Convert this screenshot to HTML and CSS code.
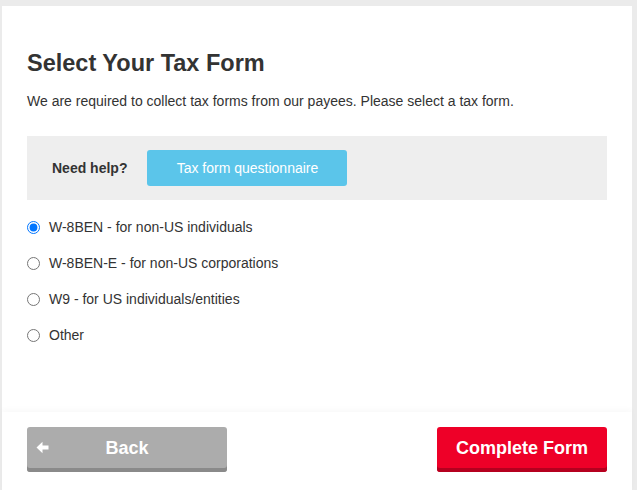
FILE: index.html
```html
<!DOCTYPE html>
<html lang="en">
<head>
    <meta charset="UTF-8">
    <title>Select Your Tax Form</title>
    <link rel="stylesheet" href="styles.css">
</head>
<body>
    <div class="tax-card">
        <div class="tax-body">
            <h1>Select Your Tax Form</h1>
            <p class="intro">We are required to collect tax forms from our payees. Please select a tax form.</p>

            <div class="help-box">
                <span class="help-label">Need help?</span>
                <button class="help-button">Tax form questionnaire</button>
            </div>

            <div class="form-options">
                <label class="option">
                    <input type="radio" name="taxForm" value="w8ben" checked>
                    <span>W-8BEN - for non-US individuals</span>
                </label>
                <label class="option">
                    <input type="radio" name="taxForm" value="w8bene">
                    <span>W-8BEN-E - for non-US corporations</span>
                </label>
                <label class="option">
                    <input type="radio" name="taxForm" value="w9">
                    <span>W9 - for US individuals/entities</span>
                </label>
                <label class="option">
                    <input type="radio" name="taxForm" value="other">
                    <span>Other</span>
                </label>
            </div>
        </div>

        <div class="tax-footer">
            <button class="btn back">
                <svg class="back-arrow" width="13" height="13" viewBox="0 0 13 13">
                    <path d="M0.5 6.5 L6.5 0.8 L6.5 4.6 L12.5 4.6 L12.5 8.4 L6.5 8.4 L6.5 12.2 Z" fill="#fff"/>
                </svg>
                Back
            </button>
            <button class="btn complete">Complete Form</button>
        </div>
    </div>
</body>
</html>
```

FILE: styles.css
```css
:root {
    --text-color: #333;
    --page-background: #ebebeb;
    --help-background: #eeeeee;
    --help-button: #5bc5ea;
    --back-color: #acacac;
    --back-shade: #8a8a8a;
    --complete-color: #ee0028;
    --complete-shade: #b5001f;
}
body {
    font-family: 'Liberation Sans', Arial, sans-serif;
    background-color: var(--page-background);
    color: var(--text-color);
    margin: 0;
    padding: 6px 0 0 2px;
}
.tax-card {
    background-color: #fff;
    width: 630px;
    min-height: 484px;
}
.tax-body {
    padding: 44px 25px 67px;
}
h1 {
    font-size: 23.5px;
    line-height: 26px;
    margin: 0 0 15px;
}
.intro {
    font-size: 14px;
    line-height: 20px;
    margin: 0 0 25px;
}
.help-box {
    display: flex;
    align-items: center;
    gap: 20px;
    height: 64px;
    padding: 0 25px;
    background-color: var(--help-background);
}
.help-label {
    font-weight: bold;
    font-size: 14px;
}
.help-button {
    width: 200px;
    height: 36px;
    border: none;
    border-radius: 3px;
    background-color: var(--help-button);
    color: #fff;
    font-family: 'Liberation Sans', Arial, sans-serif;
    font-size: 14px;
    cursor: pointer;
}
.form-options {
    display: flex;
    flex-direction: column;
    gap: 16px;
    margin-top: 17px;
}
.option {
    display: flex;
    align-items: center;
    gap: 9px;
    font-size: 14px;
    line-height: 20px;
    cursor: pointer;
}
.option input {
    width: 13px;
    height: 13px;
    margin: 0;
}
.tax-footer {
    display: flex;
    justify-content: space-between;
    padding: 15px 25px 20px;
    box-shadow: 0 -3px 5px rgba(0, 0, 0, 0.025);
}
.btn {
    position: relative;
    height: 45px;
    border: none;
    border-radius: 3px;
    color: #fff;
    font-family: 'Liberation Sans', Arial, sans-serif;
    font-size: 18px;
    font-weight: bold;
    cursor: pointer;
}
.btn.back {
    width: 200px;
    background-color: var(--back-color);
    box-shadow: inset 0 -4px 0 var(--back-shade);
    padding-bottom: 4px;
}
.btn.complete {
    width: 170px;
    background-color: var(--complete-color);
    box-shadow: inset 0 -4px 0 var(--complete-shade);
    padding-bottom: 4px;
}
.back-arrow {
    position: absolute;
    left: 9px;
    top: 14px;
}
```
